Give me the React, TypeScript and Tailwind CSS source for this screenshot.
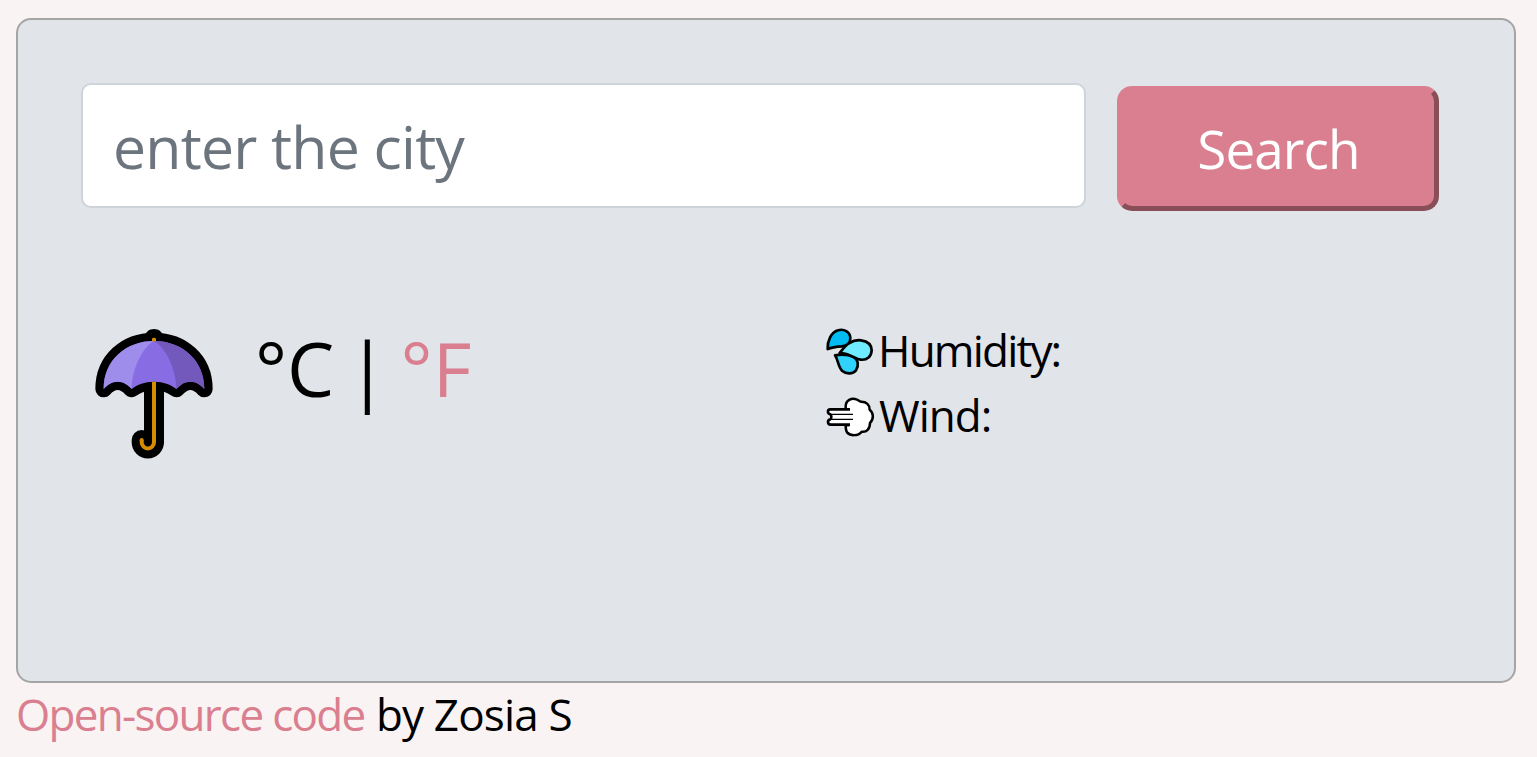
import React from "react";

function Umbrella() {
  return (
    <svg className="block h-[131px] w-[118px] shrink-0" viewBox="45 54 354 393" aria-hidden="true">
      <path
        d="M222 130V397A18.500 18.500 0 0 1 185 397V390"
        fill="none"
        stroke="#000"
        strokeWidth="60"
        strokeLinecap="round"
        strokeLinejoin="round"
      />
      <path d="M194 74C201 66 206 57 222 57S243 66 250 74V90H194Z" fill="#000" />
      <path
        d="M71 237C71 150 138 93 222 93S373 150 373 237C362 225 350 215 331 215C311 215 300 226 289 237C272 224 250 215 222 215S172 224 155 237C144 225 132 215 113 215S82 225 71 237Z"
        fill="#000"
        stroke="#000"
        strokeWidth="50"
        strokeLinejoin="round"
      />
      <path
        d="M71 237C71 150 138 93 222 93S373 150 373 237C362 225 350 215 331 215C311 215 300 226 289 237C272 224 250 215 222 215S172 224 155 237C144 225 132 215 113 215S82 225 71 237Z"
        fill="#886ce4"
      />
      <path d="M71 237C71 150 138 93 222 93C185 114 155 181 155 237C144 225 132 215 113 215S82 225 71 237Z" fill="#9f8dec" />
      <path d="M373 237C373 150 306 93 222 93C259 114 289 181 289 237C300 226 311 215 331 215S362 225 373 237Z" fill="#7459bd" />
      <path d="M216 94V87Q216 83 222 83T228 87V94Z" fill="#d48c00" />
      <path
        d="M222 215V397A18.500 18.500 0 0 1 185 397V390"
        fill="none"
        stroke="#d48c00"
        strokeWidth="12"
      />
      <circle cx="185" cy="390" r="6" fill="#d48c00" />
    </svg>
  );
}

function Droplets() {
  return (
    <svg
      className="block size-[50px] shrink-0"
      viewBox="30 18 150 150"
      stroke="#000"
      strokeWidth="8"
      strokeLinejoin="round"
      aria-hidden="true"
    >
      <path d="M38 84C37 60 48 34 69 28C87 22 105 33 106 50C107 66 97 74 81 76C63 77 52 78 38 84Z" fill="#00bcf2" />
      <path d="M60 103C80 99 101 101 116 108C130 115 132 135 123 148C113 160 94 160 82 150C69 139 70 117 60 103Z" fill="#30d2fc" />
      <path d="M74 96C90 73 113 55 138 58C158 61 170 71 170 88C169 106 157 118 137 116C120 115 107 96 74 96Z" fill="#70eaff" />
    </svg>
  );
}

function Gust() {
  return (
    <svg className="block h-[41px] w-[50px] shrink-0" viewBox="30 33 150 123" stroke="#000" strokeLinejoin="round" aria-hidden="true">
      <path
        d="M103 73H92V66C91 45 111 38 124 43C131 45 134 50 139 50C154 50 164 59 164 74C176 83 177 103 165 114C165 132 155 142 140 140C129 154 106 153 96 142C92 136 92 130 92 121H103"
        fill="#fff"
        strokeWidth="7.5"
      />
      <path d="M103 73H45C36 74 37 87 46 88H54C49 92 49 99 54 103H46C37 105 36 118 46 119H103Z" fill="#fff" stroke="none" />
      <path d="M105 73H46C36 74 37 86 46 88C50 90 50 101 46 103C36 105 37 118 47 119H105" fill="none" strokeWidth="8" />
      <path d="M46 88H114M46 103H114" fill="none" strokeWidth="4" />
    </svg>
  );
}

export default function App() {
  return (
    <div className="flex h-[757px] flex-col overflow-hidden bg-[#f9f3f3] pt-[18px] pr-[21px] pl-4 font-['Open_Sans',sans-serif] text-black">
      <main className="h-[665px] w-[1500px] shrink-0 rounded-[15px] border-2 border-[#a5a5a5] bg-[#e1e4e8] pt-[63px] pl-[63px]">
        <form className="flex items-start gap-[31px]" onSubmit={(e) => e.preventDefault()}>
          <input
            type="search"
            placeholder="enter the city"
            className="h-[125px] w-[1005px] rounded-[10px] border-2 border-[#ced4da] bg-white pr-[31px] pl-[30px] text-[59px] leading-[88px] tracking-[-0.8px] outline-none placeholder:text-[#6c757d] placeholder:opacity-100"
          />
          <button
            type="submit"
            className="mt-[3px] h-[125px] w-[322px] rounded-[15px] border-[5px] border-t-[#da7f8f] border-r-[#884f59] border-b-[#884f59] border-l-[#da7f8f] bg-[#da7f8f] pl-[1px] text-[53px] leading-[80px] tracking-[-0.9px] text-white"
          >
            Search
          </button>
        </form>
        <section className="mt-[108px] flex">
          <div className="flex w-[744px] pt-[9px] pl-[14px]">
            <Umbrella />
            <div className="ml-[42px] h-[90px] text-[75px] leading-[80px] [word-spacing:-7px] whitespace-pre">
              °C | <a href="#fahrenheit" className="text-[#da7f8f]">°F</a>
            </div>
          </div>
          <ul className="text-[44px]">
            <li className="flex h-[65px] items-center">
              <Droplets />
              <span className="pb-[3px] pl-[3px] leading-[62px] tracking-[-1.8px]">Humidity:</span>
            </li>
            <li className="flex h-[65px] items-center">
              <Gust />
              <span className="pb-[3px] pl-[4px] leading-[62px] tracking-[-1px]">Wind:</span>
            </li>
          </ul>
        </section>
      </main>
      <footer className="text-[44px] leading-[63px]">
        <a href="#source" className="tracking-[-1.7px] text-[#da7f8f]">Open-source code</a> <span className="tracking-[-0.85px]">by Zosia S</span>
      </footer>
    </div>
  );
}
